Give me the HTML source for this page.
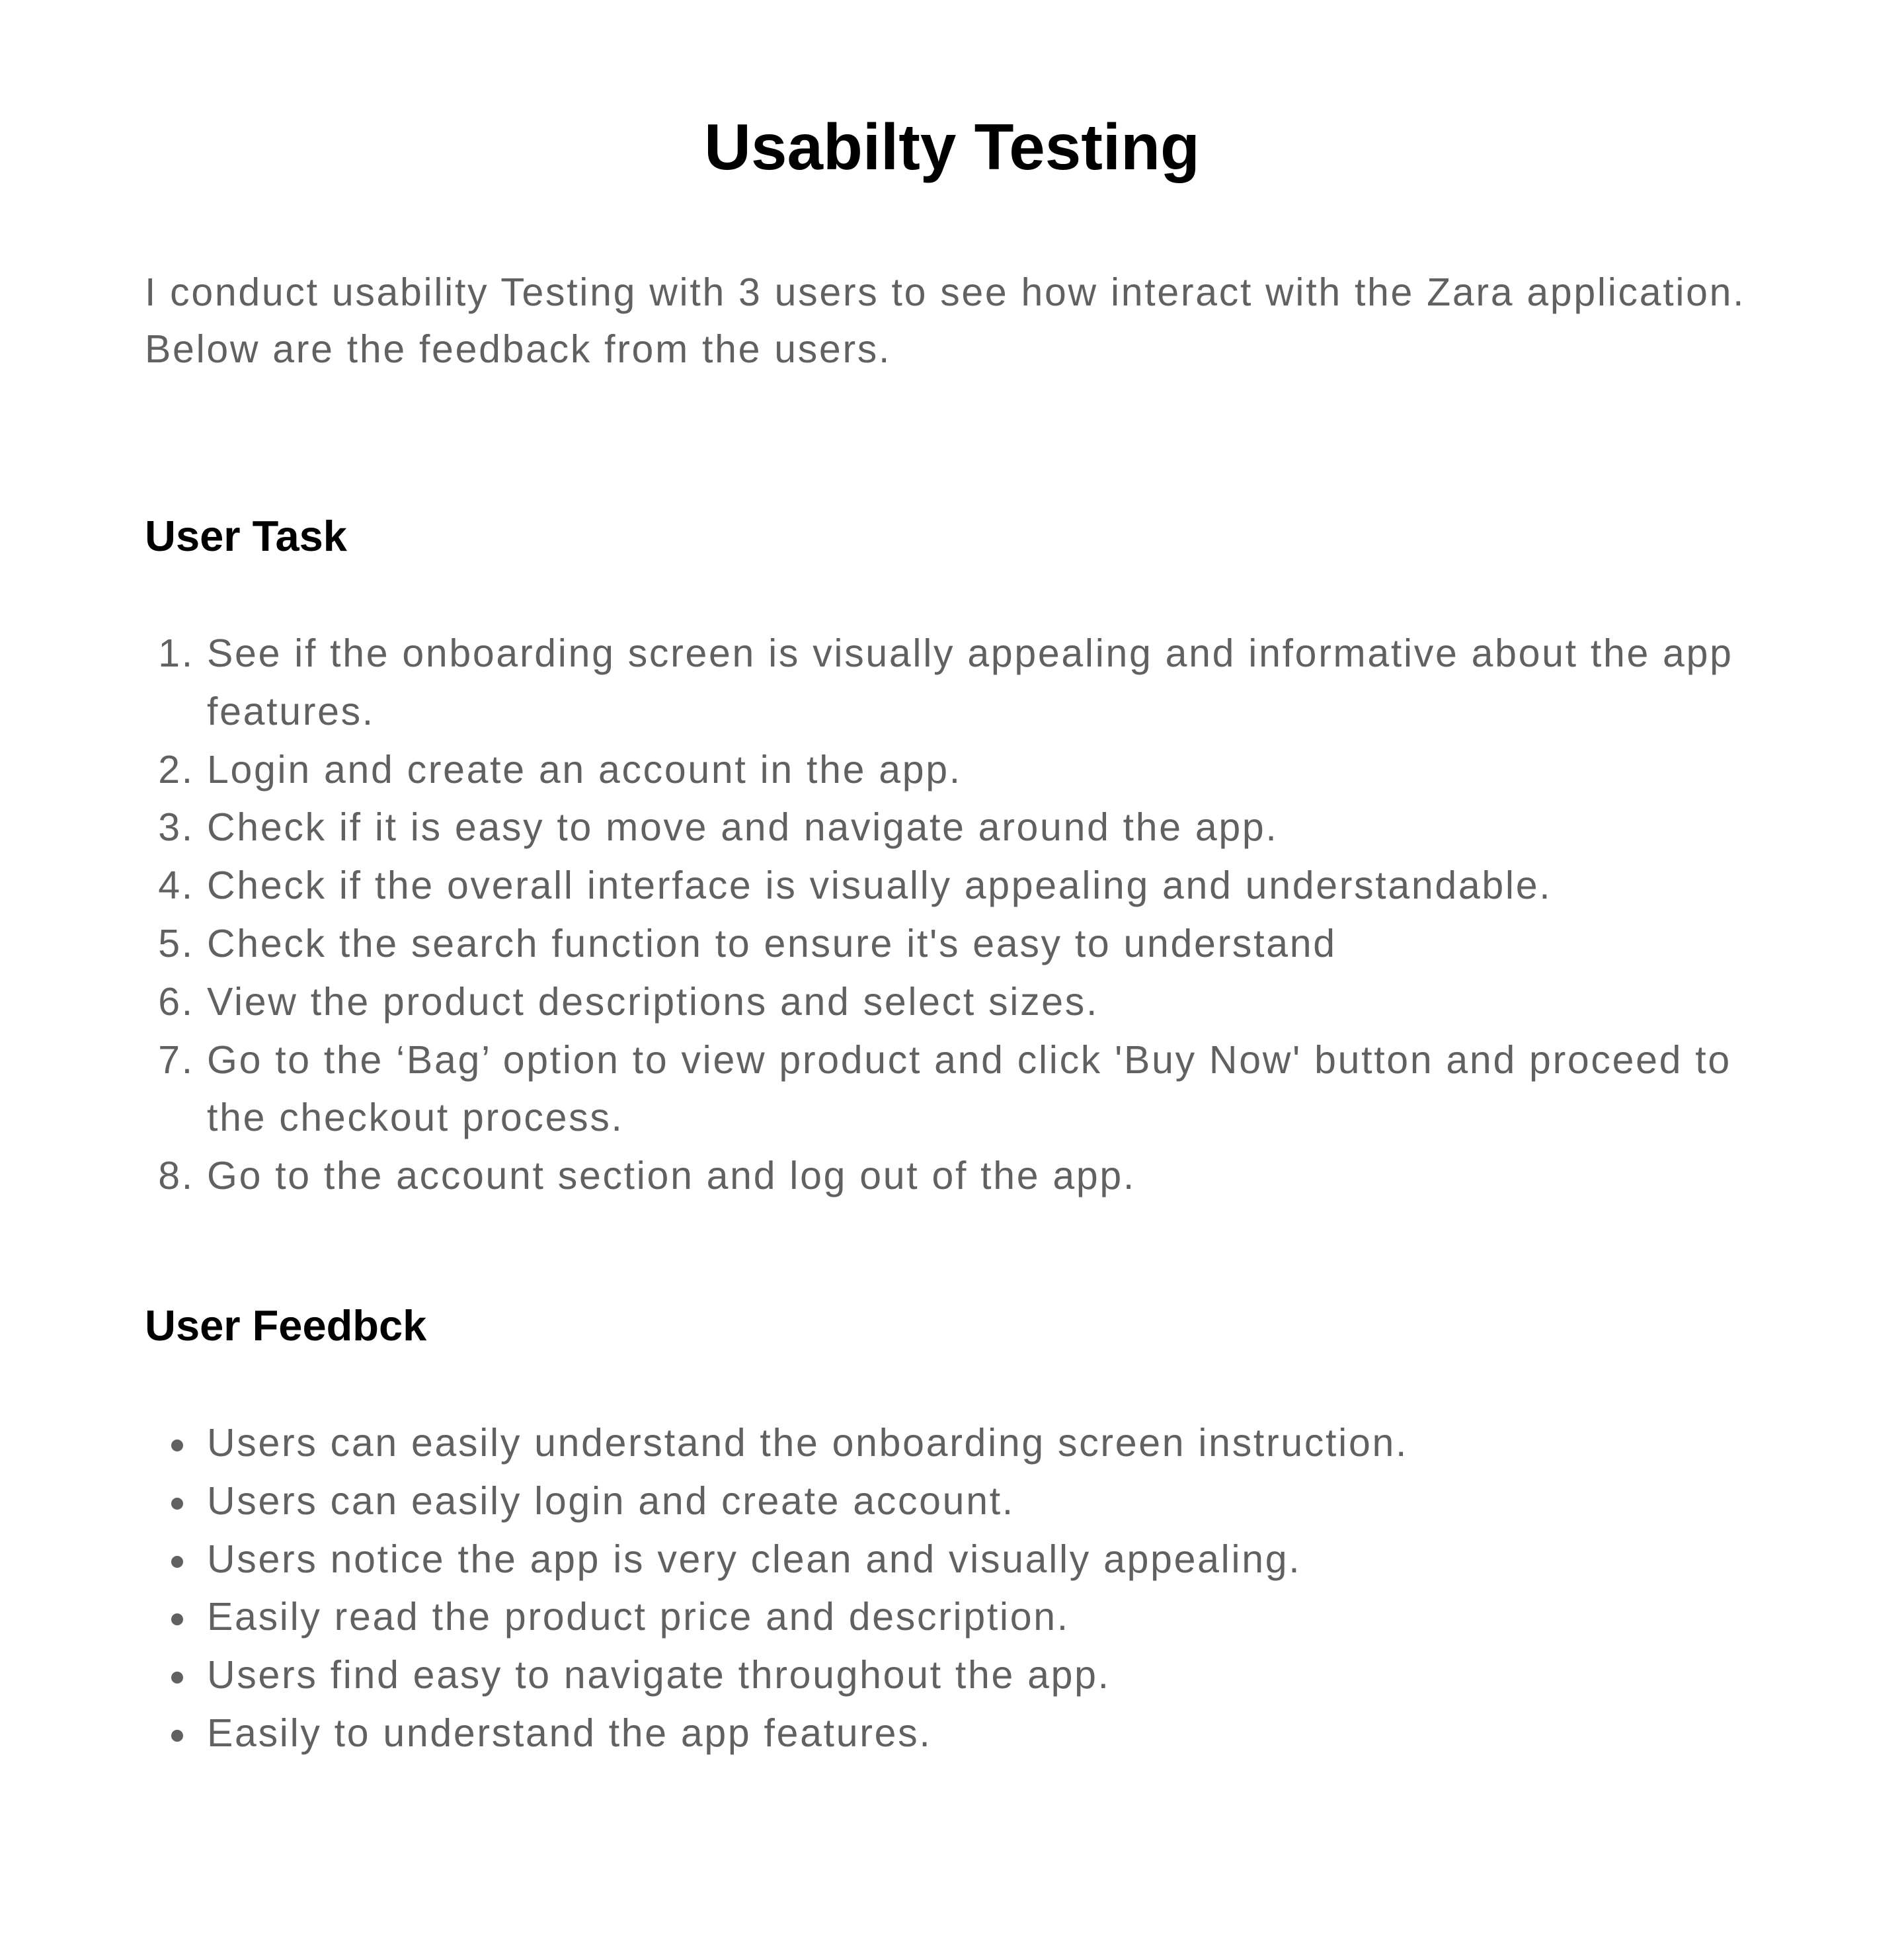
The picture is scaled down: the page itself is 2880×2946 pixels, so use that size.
<!DOCTYPE html>
<html><head><meta charset="utf-8"><style>
html,body{margin:0;padding:0;background:#fff;width:2880px;height:2946px;overflow:hidden}
body{position:relative;font-family:"Liberation Sans",sans-serif}
.t{position:absolute;left:0;width:2880px;top:162px;text-align:center;font-size:98px;line-height:120px;font-weight:bold;color:#000}
.p{position:absolute;left:219px;top:399px;font-size:59px;line-height:86px;color:#616161;white-space:nowrap;letter-spacing:2.7px}
.h{position:absolute;left:219px;font-size:65px;line-height:80px;font-weight:bold;color:#000}
ol,ul{position:absolute;left:0;margin:0;padding:0 0 0 313px;width:2330px;font-size:59px;line-height:87.8px;color:#616161;letter-spacing:2.7px}
ol li::marker{color:#616161}
ul{list-style:none}
ul li{position:relative}
ul li::before{content:"";position:absolute;left:-54px;top:38px;width:18px;height:18px;border-radius:50%;background:#616161}
</style></head><body>
<div class="t">Usabilty Testing</div>
<div class="p">I conduct usability Testing with 3 users to see how interact with the Zara application.<br>Below are the feedback from the users.</div>
<div class="h" style="top:771px">User Task</div>
<ol style="top:945px">
<li>See if the onboarding screen is visually appealing and informative about the app features.</li>
<li>Login and create an account in the app.</li>
<li>Check if it is easy to move and navigate around the app.</li>
<li>Check if the overall interface is visually appealing and understandable.</li>
<li>Check the search function to ensure it's easy to understand</li>
<li>View the product descriptions and select sizes.</li>
<li>Go to the ‘Bag’ option to view product and click 'Buy Now' button and proceed to<br>the checkout process.</li>
<li>Go to the account section and log out of the app.</li>
</ol>
<div class="h" style="top:1965px">User Feedbck</div>
<ul style="top:2139px">
<li>Users can easily understand the onboarding screen instruction.</li>
<li>Users can easily login and create account.</li>
<li>Users notice the app is very clean and visually appealing.</li>
<li>Easily read the product price and description.</li>
<li>Users find easy to navigate throughout the app.</li>
<li>Easily to understand the app features.</li>
</ul>
</body></html>
